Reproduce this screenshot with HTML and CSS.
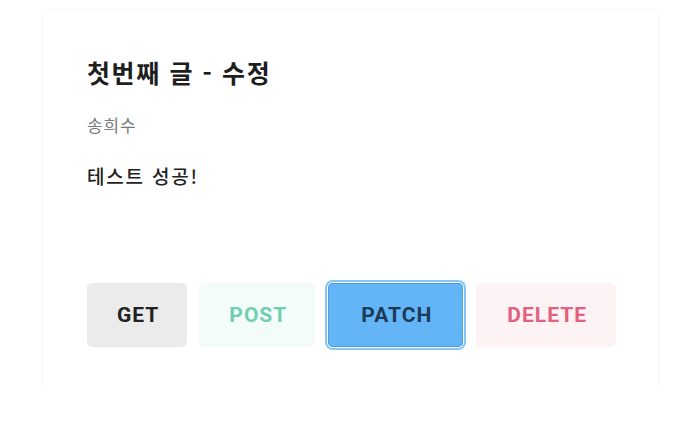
FILE: index.html
```html
<!DOCTYPE html>
<html lang="ko">
<head>
<meta charset="utf-8">
<link rel="stylesheet" href="styles.css">
</head>
<body>
<div class="card">
  <h1 class="title">첫번째 글 - 수정</h1>
  <p class="author">송희수</p>
  <p class="content">테스트 성공!</p>
  <div class="actions">
    <button class="btn btn-get">GET</button>
    <button class="btn btn-post">POST</button>
    <button class="btn btn-patch">PATCH</button>
    <button class="btn btn-delete">DELETE</button>
  </div>
</div>
</body>
</html>
```

FILE: styles.css
```css
html, body {
  margin: 0;
  padding: 0;
  background: #ffffff;
}
body {
  font-family: Roboto, "Noto Sans CJK KR", sans-serif;
  padding: 10px 34px 0 43px;
}
.card {
  box-sizing: border-box;
  width: 615px;
  height: 378px;
  padding: 44px 44px 41px;
  background: #ffffff;
  border-radius: 4px;
  box-shadow: 0 0 3px rgba(0, 0, 0, 0.06), 0 1px 2px rgba(0, 0, 0, 0.03);
  display: flex;
  flex-direction: column;
}
.title {
  margin: 0;
  font-family: "Noto Sans CJK KR", sans-serif;
  font-size: 25px;
  line-height: 36px;
  letter-spacing: 1.6px;
  font-weight: 700;
  color: #1e1e1e;
}
.author {
  margin: 23px 0 0;
  font-family: "Noto Sans CJK KR", sans-serif;
  font-size: 17px;
  line-height: 24px;
  letter-spacing: 0.8px;
  color: #7a7a7a;
}
.content {
  margin: 27px 0 0;
  font-family: "Noto Sans CJK KR", sans-serif;
  font-size: 19px;
  line-height: 24px;
  letter-spacing: 1.8px;
  font-weight: 500;
  color: #222222;
}
.actions {
  margin-top: auto;
  display: flex;
  gap: 12px;
}
.btn {
  height: 64px;
  padding: 0 28px 0 30px;
  border: none;
  border-radius: 5px;
  font-family: Roboto, sans-serif;
  font-size: 21px;
  font-weight: 700;
  letter-spacing: 1px;
  cursor: pointer;
}
.btn-get {
  background: #ebebeb;
  color: #222222;
}
.btn-post {
  background: #f3fcf9;
  color: #6fd0b1;
}
.btn-patch {
  padding: 0 31px 0 33px;
  margin-left: 1px;
  margin-right: 1px;
  background: #64b5f6;
  color: #1b3a58;
  box-shadow: inset 0 0 0 1px #4a9de0, 0 0 0 1px #ffffff, 0 0 0 3px #86c6f7;
}
.btn-delete {
  padding: 0 29px 0 31px;
  background: #fdf2f4;
  color: #e1617f;
}
```
